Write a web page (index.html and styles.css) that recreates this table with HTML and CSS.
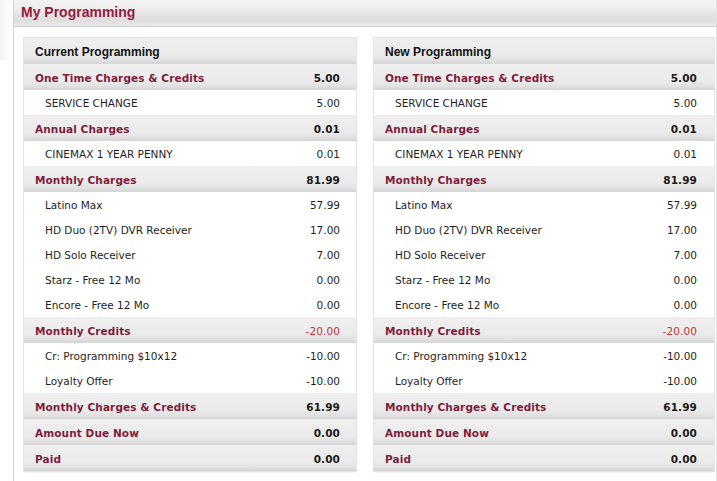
FILE: index.html
```html
<!DOCTYPE html>
<html>
<head>
<meta charset="utf-8">
<link rel="stylesheet" href="styles.css">
</head>
<body>
<div class="panel">
  <div class="panel-head"><h1>My Programming</h1></div>
  <div class="panel-body">
    <div class="box">
      <div class="row title"><span>Current Programming</span></div>
      <div class="row sec"><span>One Time Charges &amp; Credits</span><span class="val">5.00</span></div>
      <div class="row item"><span>SERVICE CHANGE</span><span>5.00</span></div>
      <div class="row sec"><span>Annual Charges</span><span class="val">0.01</span></div>
      <div class="row item"><span>CINEMAX 1 YEAR PENNY</span><span>0.01</span></div>
      <div class="row sec"><span>Monthly Charges</span><span class="val">81.99</span></div>
      <div class="row item"><span>Latino Max</span><span>57.99</span></div>
      <div class="row item"><span>HD Duo (2TV) DVR Receiver</span><span>17.00</span></div>
      <div class="row item"><span>HD Solo Receiver</span><span>7.00</span></div>
      <div class="row item"><span>Starz - Free 12 Mo</span><span>0.00</span></div>
      <div class="row item"><span>Encore - Free 12 Mo</span><span>0.00</span></div>
      <div class="row sec"><span>Monthly Credits</span><span class="neg">-20.00</span></div>
      <div class="row item"><span>Cr: Programming $10x12</span><span>-10.00</span></div>
      <div class="row item"><span>Loyalty Offer</span><span>-10.00</span></div>
      <div class="row sec"><span>Monthly Charges &amp; Credits</span><span class="val">61.99</span></div>
      <div class="row sec"><span>Amount Due Now</span><span class="val">0.00</span></div>
      <div class="row sec"><span>Paid</span><span class="val">0.00</span></div>
    </div>
    <div class="box">
      <div class="row title"><span>New Programming</span></div>
      <div class="row sec"><span>One Time Charges &amp; Credits</span><span class="val">5.00</span></div>
      <div class="row item"><span>SERVICE CHANGE</span><span>5.00</span></div>
      <div class="row sec"><span>Annual Charges</span><span class="val">0.01</span></div>
      <div class="row item"><span>CINEMAX 1 YEAR PENNY</span><span>0.01</span></div>
      <div class="row sec"><span>Monthly Charges</span><span class="val">81.99</span></div>
      <div class="row item"><span>Latino Max</span><span>57.99</span></div>
      <div class="row item"><span>HD Duo (2TV) DVR Receiver</span><span>17.00</span></div>
      <div class="row item"><span>HD Solo Receiver</span><span>7.00</span></div>
      <div class="row item"><span>Starz - Free 12 Mo</span><span>0.00</span></div>
      <div class="row item"><span>Encore - Free 12 Mo</span><span>0.00</span></div>
      <div class="row sec"><span>Monthly Credits</span><span class="neg">-20.00</span></div>
      <div class="row item"><span>Cr: Programming $10x12</span><span>-10.00</span></div>
      <div class="row item"><span>Loyalty Offer</span><span>-10.00</span></div>
      <div class="row sec"><span>Monthly Charges &amp; Credits</span><span class="val">61.99</span></div>
      <div class="row sec"><span>Amount Due Now</span><span class="val">0.00</span></div>
      <div class="row sec"><span>Paid</span><span class="val">0.00</span></div>
    </div>
  </div>
</div>
</body>
</html>
```

FILE: styles.css
```css
html, body {
  margin: 0;
  padding: 0;
  background: #fff;
  height: 100%;
}
body {
  font-family: "DejaVu Sans", Verdana, sans-serif;
  background: linear-gradient(to right, #f4f4f4 0, #ffffff 13px) no-repeat;
  background-size: 13px 60px;
}
.panel {
  margin-left: 13px;
  border-left: 1px solid #d3d3d3;
  border-right: 1px solid #e2e2e2;
  min-height: 481px;
  box-sizing: border-box;
  background: #fff;
}
.panel-head {
  height: 26px;
  border-bottom: 1px solid #cfcfcf;
  background: linear-gradient(to bottom, #f3f3f3 0%, #efefef 30%, #e3e3e3 60%, #dedede 80%, #ececec 100%);
  display: flex;
  align-items: center;
  padding-left: 7px;
}
.panel-head h1 {
  margin: 0;
  font-family: "Liberation Sans", Arial, sans-serif;
  font-size: 14px;
  font-weight: bold;
  color: #931a3c;
  position: relative;
  top: -1px;
}
.panel-body {
  display: grid;
  grid-template-columns: 332px 340px;
  column-gap: 18px;
  padding: 11px 0 0 10px;
  align-items: start;
}
.box {
  background: #fff;
  box-shadow: 0 0 0 1px #e4e4e4, 0 1px 2px rgba(0, 0, 0, 0.12);
}
.row {
  display: flex;
  justify-content: space-between;
  align-items: center;
  box-sizing: border-box;
  padding: 1px 16px 0 11px;
  font-size: 10.5px;
  white-space: nowrap;
}
.title, .sec {
  height: 26px;
  background: linear-gradient(to bottom, #efefef 0%, #ebebeb 65%, #e2e2e2 85%, #d4d4d4 100%);
}
.title {
  font-family: "Liberation Sans", Arial, sans-serif;
  font-size: 12px;
  font-weight: bold;
  color: #111;
}
.sec {
  font-weight: bold;
  color: #7d1d3b;
  letter-spacing: 0.1px;
}
.sec .val {
  color: #1a1a1a;
}
.sec .neg {
  font-weight: normal;
  color: #c8303c;
}
.item {
  height: 25px;
  padding-left: 21px;
  color: #1e1e1e;
}
.box:nth-child(2) .row {
  padding-right: 17px;
}
```
